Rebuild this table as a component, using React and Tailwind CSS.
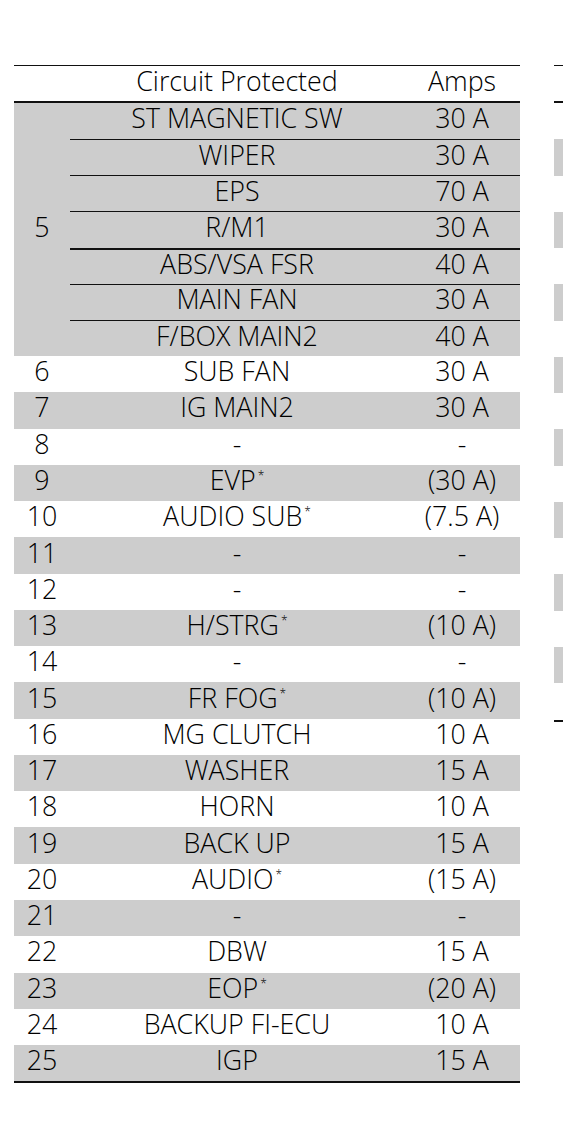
import React from "react";

const group = [
  ["ST MAGNETIC SW", "30 A"],
  ["WIPER", "30 A"],
  ["EPS", "70 A"],
  ["R/M1", "30 A"],
  ["ABS/VSA FSR", "40 A"],
  ["MAIN FAN", "30 A"],
  ["F/BOX MAIN2", "40 A"],
];

const rows = [
  ["6", "SUB FAN", "30 A"],
  ["7", "IG MAIN2", "30 A"],
  ["8", "-", "-"],
  ["9", "EVP", "(30 A)", true],
  ["10", "AUDIO SUB", "(7.5 A)", true],
  ["11", "-", "-"],
  ["12", "-", "-"],
  ["13", "H/STRG", "(10 A)", true],
  ["14", "-", "-"],
  ["15", "FR FOG", "(10 A)", true],
  ["16", "MG CLUTCH", "10 A"],
  ["17", "WASHER", "15 A"],
  ["18", "HORN", "10 A"],
  ["19", "BACK UP", "15 A"],
  ["20", "AUDIO", "(15 A)", true],
  ["21", "-", "-"],
  ["22", "DBW", "15 A"],
  ["23", "EOP", "(20 A)", true],
  ["24", "BACKUP FI-ECU", "10 A"],
  ["25", "IGP", "15 A"],
];

function Star() {
  return <span className="relative -top-[10px] ml-[2px] text-[12px]">*</span>;
}

export default function App() {
  return (
    <div
      className="w-[563px] h-[1125px] overflow-hidden bg-white text-black font-light"
      style={{ fontFamily: '"Open Sans", "Noto Sans", sans-serif' }}
    >
      <div className="flex gap-[34px] pt-[65px] pl-[14px]">
        {/* main table */}
        <div className="w-[506px] shrink-0 text-[26.8px] leading-none">
          <div className="flex h-[38px] items-center pb-[5px] border-t border-b-2 border-[#111]">
            <div className="w-[56px]" />
            <div className="w-[334px] text-center">Circuit Protected</div>
            <div className="w-[116px] text-center">Amps</div>
          </div>
          <div className="flex bg-[#cdcdcd]">
            <div className="w-[56px] flex items-center justify-center pb-[5px]">5</div>
            <div className="flex-1 flex flex-col">
              {group.map(([c, a], i) => (
                <div
                  key={c}
                  className={
                    "flex h-[36.15px] items-center pb-[5px] " +
                    (i === 0 ? "" : i === 4 ? "border-t-2 border-[#111]" : "border-t border-[#111]")
                  }
                >
                  <div className="w-[334px] text-center">{c}</div>
                  <div className="w-[116px] text-center">{a}</div>
                </div>
              ))}
            </div>
          </div>
          {rows.map(([n, c, a, star], i) => (
            <div
              key={n}
              className={
                "flex h-[36.28px] items-center pb-[5px] " +
                (i % 2 === 1 ? "bg-[#cdcdcd]" : "bg-white")
              }
            >
              <div className="w-[56px] text-center">{n}</div>
              <div className="w-[334px] text-center">
                {c}
                {star && <Star />}
              </div>
              <div className="w-[116px] text-center">{a}</div>
            </div>
          ))}
          <div className="border-t-2 border-[#111]" />
        </div>

        {/* partial right table */}
        <div className="w-[400px] shrink-0">
          <div className="h-[38px] border-t border-b-2 border-[#111]" />
          {Array.from({ length: 17 }).map((_, i) => (
            <div
              key={i}
              className={"h-[36.28px] " + (i % 2 === 1 ? "bg-[#cdcdcd]" : "bg-white")}
            />
          ))}
          <div className="border-t-2 border-[#111]" />
        </div>
      </div>
    </div>
  );
}
